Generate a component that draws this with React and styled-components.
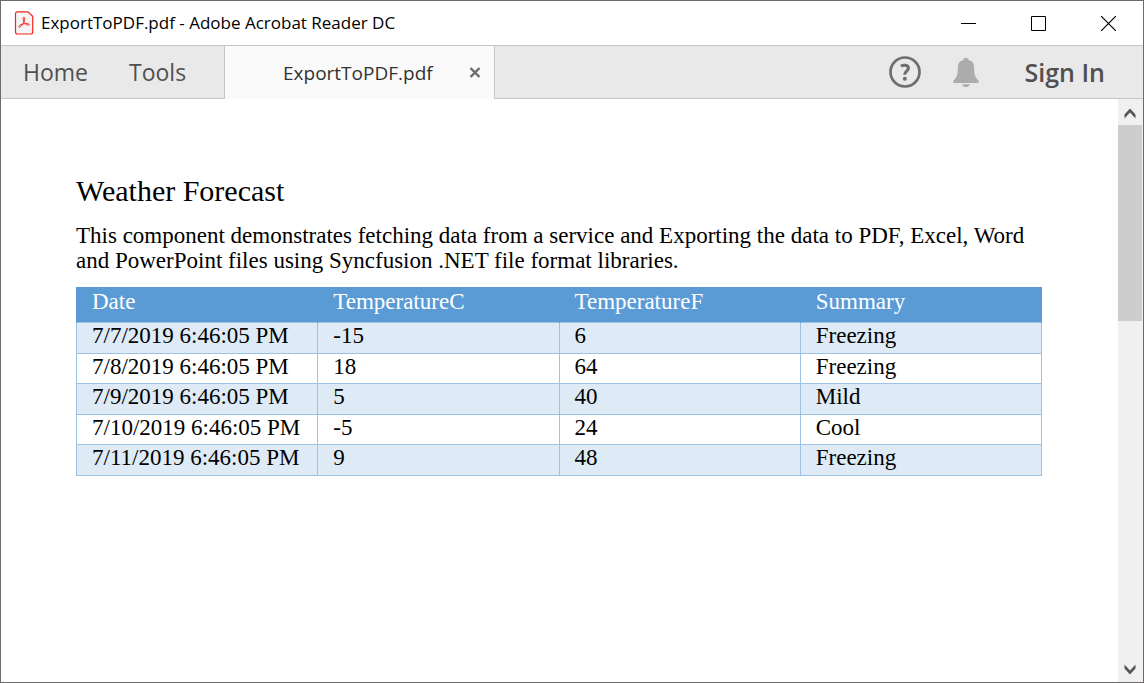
import React from 'react';
import styled, { createGlobalStyle } from 'styled-components';

const GlobalStyle = createGlobalStyle`
  * { box-sizing: border-box; }
  body { margin: 0; background: #fff; }
  button { border: 0; padding: 0; background: none; font: inherit; color: inherit; cursor: pointer; }
`;

const Window = styled.div`
  min-height: 100vh;
  display: flex;
  flex-direction: column;
  border: 1px solid #6c6a6a;
  background: #fff;
  font-family: 'Open Sans', 'Noto Sans', sans-serif;
`;

const TitleBar = styled.header`
  height: 45px;
  display: flex;
  align-items: center;
  border-bottom: 1px solid #c6c6c6;
  padding-left: 13px;
`;

const Title = styled.h1`
  flex: 1;
  margin: 0 0 0 7px;
  font-size: 17px;
  line-height: 24px;
  font-weight: 400;
  color: #000;
`;

const WindowButton = styled.button`
  width: 70px;
  height: 44px;
  display: flex;
  align-items: center;
  justify-content: center;
`;

const Toolbar = styled.nav`
  height: 53px;
  display: flex;
  align-items: center;
  background: #e9e9e9;
  border-bottom: 1px solid #c6c6c6;
  color: #505050;
`;

const NavItems = styled.div`
  width: 223px;
  padding-left: 22px;
  display: flex;
  gap: 41px;
`;

const NavButton = styled.button`
  font-size: 23px;
  line-height: 32px;
`;

const Tab = styled.div`
  width: 271px;
  height: 53px;
  margin-bottom: -1px;
  padding: 0 11px 0 58px;
  display: flex;
  align-items: center;
  justify-content: space-between;
  background: #fafafa;
  border: solid #c6c6c6;
  border-width: 0 1px;
`;

const TabLabel = styled.button`
  font-size: 19px;
  line-height: 28px;
  color: #323232;
`;

const IconButton = styled.button`
  display: flex;
`;

const Account = styled.div`
  flex: 1;
  display: flex;
  align-items: center;
  justify-content: flex-end;
  gap: 32px;
  padding-right: 38px;
`;

const SignIn = styled.button`
  margin-left: 14px;
  font-size: 25px;
  line-height: 32px;
  font-weight: 600;
`;

const Viewer = styled.div`
  flex: 1;
  display: flex;
`;

const Page = styled.main`
  flex: 1;
  padding: 74px 76px 40px 75px;
  font-family: 'Liberation Serif', serif;
  font-size: 23px;
  line-height: 25px;
  color: #000;
`;

const Heading = styled.h2`
  margin: 0 0 14px;
  font-size: 30px;
  line-height: 36px;
  font-weight: 400;
`;

const Intro = styled.p`
  margin: 0 0 14px;
`;

const Table = styled.table`
  width: 100%;
  table-layout: fixed;
  border-collapse: collapse;
`;

const HeadCell = styled.th`
  padding: 1px 15px 8px;
  text-align: left;
  font-weight: 400;
  color: #fff;
  background: #5b9bd5;
  border: 1px solid #5b9bd5;
  border-bottom: 0;
`;

const Cell = styled.td`
  padding: 0 15px 5px;
  border: 1px solid #9cc2e5;
`;

const Row = styled.tr`
  &:nth-child(odd) { background: #deeaf6; }
  &:nth-child(even) ${Cell} { padding-bottom: 4px; }
`;

const ScrollTrack = styled.div`
  width: 25px;
  padding-right: 1px;
  display: flex;
  flex-direction: column;
  background: #f0f0f0;
`;

const ScrollButton = styled.button`
  height: 26px;
  padding-top: 2px;
  display: flex;
  align-items: center;
  justify-content: center;
`;

const ScrollSpace = styled.div`
  flex: 1;
`;

const Thumb = styled.div`
  height: 37%;
  background: #cdcdcd;
`;

const forecasts = [
  ['7/7/2019 6:46:05 PM', '-15', '6', 'Freezing'],
  ['7/8/2019 6:46:05 PM', '18', '64', 'Freezing'],
  ['7/9/2019 6:46:05 PM', '5', '40', 'Mild'],
  ['7/10/2019 6:46:05 PM', '-5', '24', 'Cool'],
  ['7/11/2019 6:46:05 PM', '9', '48', 'Freezing'],
];

const PdfIcon = () => (
  <svg width="20" height="24" viewBox="0 0 20 24" fill="none" stroke="#f5271c" aria-hidden="true">
    <path d="M3.500 .8H14l4.700 4.400V21q0 2-2 2H3.500q-2 0-2-2V2.800q0-2 2-2z" fill="#f5f5f5" strokeWidth="1.200" />
    <path d="M9.800 6.300c1.700 0 .9 2.700-.1 4.900-1 2.400-2.900 5.300-4.300 4.900-1.600-.6.400-2.400 3-3 2.600-.7 6.700-.9 6.900.5.100 1.400-2.700.4-4.300-1.300-1.500-1.600-2.800-6-1.200-6z" strokeWidth="1" />
  </svg>
);

const Chevron = ({ down }) => (
  <svg width="14" height="14" viewBox="0 0 14 14" fill="#555" aria-hidden="true">
    <path d={down ? 'M1.500 1.500L7 7.500l5.500-6v4L7 11.500 1.500 5.500z' : 'M1.500 12.500L7 6.500l5.500 6v-4L7 2.500 1.500 8.500z'} />
  </svg>
);

export default function App() {
  return (
    <Window>
      <GlobalStyle />
      <TitleBar>
        <PdfIcon />
        <Title>ExportToPDF.pdf - Adobe Acrobat Reader DC</Title>
        <WindowButton aria-label="Minimize">
          <svg width="15" height="15" stroke="#000"><path d="M0 7.500h15" /></svg>
        </WindowButton>
        <WindowButton aria-label="Maximize">
          <svg width="15" height="15" fill="none" stroke="#000"><path d="M.5.5h14v14H.5z" /></svg>
        </WindowButton>
        <WindowButton aria-label="Close">
          <svg width="15" height="15" stroke="#000" strokeWidth="1.200"><path d="M0 0l15 15M15 0L0 15" /></svg>
        </WindowButton>
      </TitleBar>
      <Toolbar>
        <NavItems>
          <NavButton>Home</NavButton>
          <NavButton>Tools</NavButton>
        </NavItems>
        <Tab>
          <TabLabel>ExportToPDF.pdf</TabLabel>
          <IconButton aria-label="Close tab">
            <svg width="16" height="16" stroke="#6b6b6b" strokeWidth="2.400"><path d="M3.500 3l9 9M12.500 3l-9 9" /></svg>
          </IconButton>
        </Tab>
        <Account>
          <IconButton aria-label="Help">
            <svg width="32" height="32" viewBox="0 0 32 32" fill="none" stroke="#6e6e6e">
              <circle cx="16" cy="16" r="14.500" strokeWidth="2.700" />
              <path d="M12 10.300C14.300 8.700 19.400 8.600 19.400 12.200c0 3-3.700 3.100-3.700 6.600" strokeWidth="3.100" />
              <circle cx="15.800" cy="22.800" r="2" fill="#6e6e6e" stroke="none" />
            </svg>
          </IconButton>
          <IconButton aria-label="Notifications">
            <svg width="26" height="30" viewBox="0 0 26 30" fill="#acacac">
              <path d="M10.500 3V1.500Q10.500 1 13 1t2.500.5V3c4 .8 5.700 3.500 5.700 8 0 7 .8 9 4.300 12.500V26H.5v-2.500C4 20 4.800 18 4.800 11c0-4.500 1.700-7.200 5.700-8zM9 27.200h8Q16.200 30 13 30t-4-2.800z" />
            </svg>
          </IconButton>
          <SignIn>Sign In</SignIn>
        </Account>
      </Toolbar>
      <Viewer>
        <Page>
          <Heading>Weather Forecast</Heading>
          <Intro>
            This component demonstrates fetching data from a service and Exporting the data to PDF, Excel, Word
            and PowerPoint files using Syncfusion .NET file format libraries.
          </Intro>
          <Table>
            <thead>
              <tr>
                {['Date', 'TemperatureC', 'TemperatureF', 'Summary'].map((name) => (
                  <HeadCell key={name} scope="col">{name}</HeadCell>
                ))}
              </tr>
            </thead>
            <tbody>
              {forecasts.map((row) => (
                <Row key={row[0]}>
                  {row.map((value, i) => <Cell key={i}>{value}</Cell>)}
                </Row>
              ))}
            </tbody>
          </Table>
        </Page>
        <ScrollTrack>
          <ScrollButton aria-label="Scroll up"><Chevron /></ScrollButton>
          <ScrollSpace><Thumb /></ScrollSpace>
          <ScrollButton aria-label="Scroll down"><Chevron down /></ScrollButton>
        </ScrollTrack>
      </Viewer>
    </Window>
  );
}
